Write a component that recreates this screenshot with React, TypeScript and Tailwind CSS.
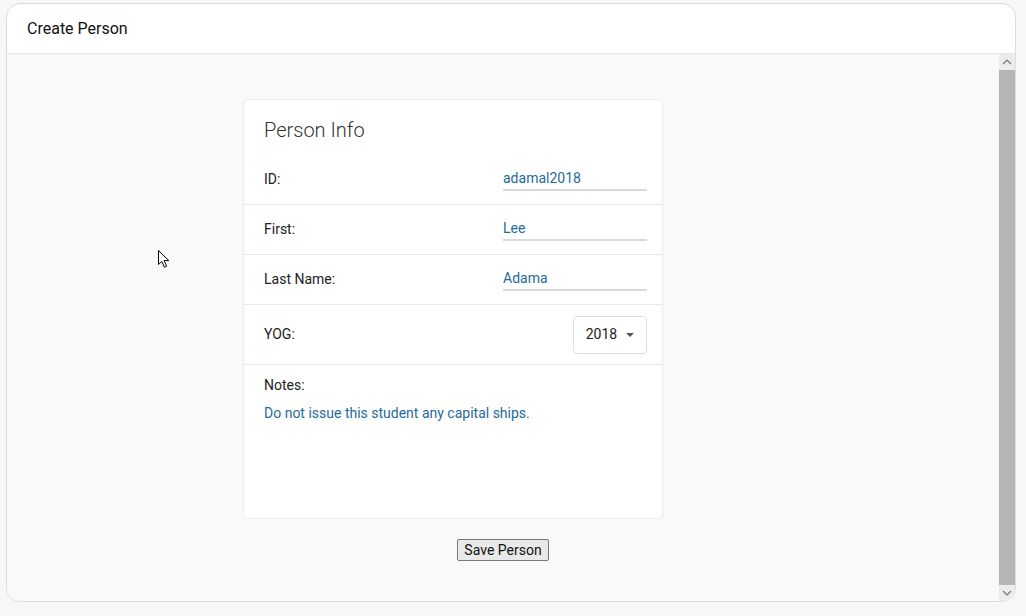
import React from "react";

const rows = [
  { label: "ID:", value: "adamal2018" },
  { label: "First:", value: "Lee" },
  { label: "Last Name:", value: "Adama" },
];

function Cursor() {
  return (
    <svg
      className="absolute left-[157px] top-[249px]"
      width="14"
      height="20"
      viewBox="0 0 14 20"
    >
      <path
        d="M1.5 1.5 L1.5 15.5 L4.8 12.4 L7.4 18.2 L9.6 17.2 L7.1 11.6 L11.8 11.6 Z"
        fill="#fff"
        stroke="#000"
        strokeWidth="1"
        strokeLinejoin="miter"
      />
    </svg>
  );
}

export default function App() {
  return (
    <div
      className="relative h-[616px] w-[1026px] bg-[#f6f7f9] px-[6px] pt-[3px]"
      style={{ fontFamily: "Roboto, 'Noto Sans', sans-serif" }}
    >
      <div className="flex h-[599px] w-[1010px] flex-col overflow-hidden rounded-[14px] border border-[#dcdcdc] bg-white">
        <div className="flex h-[50px] shrink-0 items-center border-b border-[#e6e6e6] pl-[20px] text-[16px] text-[#111]">
          Create Person
        </div>
        <div className="flex min-h-0 flex-1 bg-[#f9f9f9]">
          <div className="flex flex-1 flex-col">
            <div className="ml-[236px] mt-[45px] flex h-[420px] w-[420px] flex-col rounded-[4px] border border-[#ebebeb] bg-white">
              <div className="flex h-[55px] items-end pb-[10px] pl-[20px] text-[20px] font-light text-[#333]">
                Person Info
              </div>
              {rows.map((r) => (
                <div
                  key={r.label}
                  className="flex h-[50px] items-center justify-between border-b border-[#e8e8e8] pl-[20px] pr-[15px] text-[14px]"
                >
                  <span className="text-[#222]">{r.label}</span>
                  <div className="flex h-[22px] w-[144px] items-end border-b-2 border-[#dadada] text-[#1f6a9a]">
                    {r.value}
                  </div>
                </div>
              ))}
              <div className="flex h-[60px] items-center justify-between border-b border-[#e8e8e8] pl-[20px] pr-[15px] text-[14px]">
                <span className="text-[#222]">YOG:</span>
                <div className="flex h-[38px] w-[74px] items-center justify-center gap-[9px] rounded-[4px] border border-[#dddddd] text-[#222]">
                  <span>2018</span>
                  <svg width="8" height="4" viewBox="0 0 8 4">
                    <path d="M0 0 L8 0 L4 4 Z" fill="#555" />
                  </svg>
                </div>
              </div>
              <div className="flex flex-col pl-[20px] pt-[10px] text-[14px]">
                <span className="text-[#222]">Notes:</span>
                <span className="mt-[7px] text-[#1f6a9a]">
                  Do not issue this student any capital ships.
                </span>
              </div>
            </div>
            <div className="mt-[20px] flex justify-center">
              <button className="h-[22px] rounded-[2px] border border-[#767676] bg-[#e9e9e9] px-[6px] text-[14px] leading-none text-[#111]">
                Save Person
              </button>
            </div>
          </div>
          <div className="flex w-[16px] shrink-0 flex-col bg-[#ececec]">
            <div className="flex h-[16px] items-center justify-center">
              <svg width="10" height="6" viewBox="0 0 10 6">
                <path d="M1 5 L5 1 L9 5" fill="none" stroke="#777" strokeWidth="1.2" />
              </svg>
            </div>
            <div className="flex-1 bg-[#b5b5b5]" />
            <div className="flex h-[16px] items-center justify-center">
              <svg width="10" height="6" viewBox="0 0 10 6">
                <path d="M1 1 L5 5 L9 1" fill="none" stroke="#777" strokeWidth="1.2" />
              </svg>
            </div>
          </div>
        </div>
      </div>
      <Cursor />
    </div>
  );
}
